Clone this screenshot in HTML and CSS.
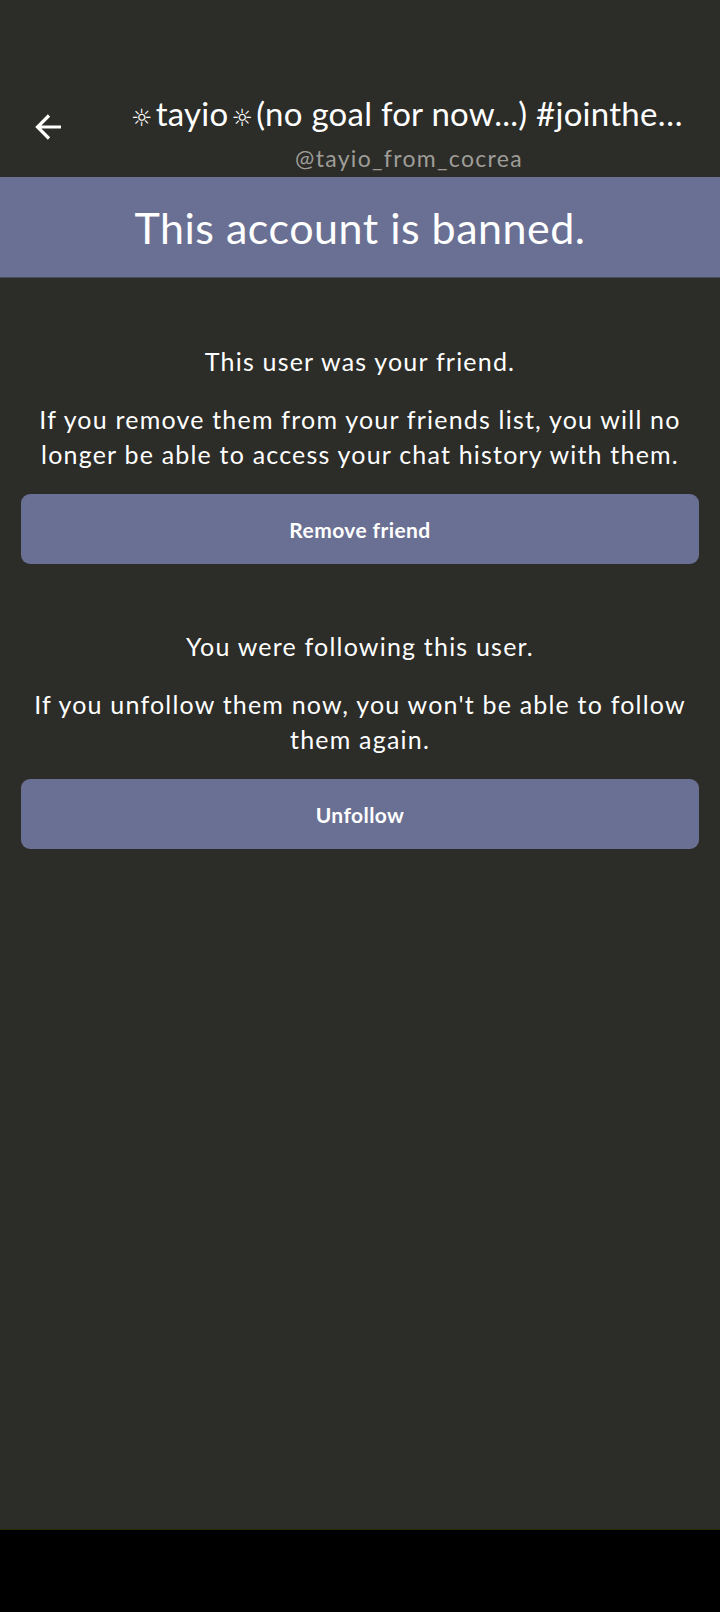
FILE: index.html
```html
<!DOCTYPE html>
<html lang="en">
<head>
    <meta charset="UTF-8">
    <meta name="viewport" content="width=device-width, initial-scale=1.0">
    <title>Banned account</title>
    <link rel="stylesheet" href="styles.css">
</head>
<body>
    <div class="app">
        <header class="header">
            <button class="back" aria-label="Back">
                <svg width="30" height="30" viewBox="0 0 30 30">
                    <path d="M27 15H4M15 3.5L3.5 15L15 26.5" fill="none" stroke="#fff" stroke-width="3.2"/>
                </svg>
            </button>
            <div class="names">
                <div class="title"><span class="sun">☼</span>tayio<span class="sun">☼</span>(no goal for now...) #jointhecocreaparty</div>
                <div class="handle">@tayio_from_cocrea</div>
            </div>
        </header>

        <div class="banner">This account is banned.</div>

        <main class="content">
            <section class="block">
                <p class="lead">This user was your friend.</p>
                <p class="note">If you remove them from your friends list, you will no longer be able to access your chat history with them.</p>
                <button class="action">Remove friend</button>
            </section>

            <section class="block">
                <p class="lead">You were following this user.</p>
                <p class="note">If you unfollow them now, you won't be able to follow them again.</p>
                <button class="action">Unfollow</button>
            </section>
        </main>

        <div class="navbar"></div>
    </div>
</body>
</html>
```

FILE: styles.css
```css
* {
    margin: 0;
    padding: 0;
    box-sizing: border-box;
}

body {
    font-family: "Lato", "Noto Sans", sans-serif;
    background-color: #2c2c28;
    color: #fff;
}

.app {
    display: flex;
    flex-direction: column;
    height: 1612px;
}

.header {
    display: flex;
    align-items: flex-start;
    padding-top: 93px;
    height: 177px;
}

.back {
    width: 98px;
    height: 68px;
    display: flex;
    align-items: center;
    justify-content: center;
    background: none;
    border: none;
}

.names {
    flex: 1;
    min-width: 0;
    padding: 0 30px;
    text-align: center;
}

.title {
    font-size: 33px;
    line-height: 40px;
    letter-spacing: 0.25px;
    white-space: nowrap;
    overflow: hidden;
    text-overflow: ellipsis;
}

.sun {
    font-family: "DejaVu Sans", sans-serif;
    font-size: 24px;
    margin: 0 3px;
}

.handle {
    margin-top: 7px;
    font-size: 23px;
    line-height: 26px;
    color: #9e9d98;
    letter-spacing: 1.3px;
}

.banner {
    background-color: #6a7093;
    height: 101px;
    border-bottom: 1px solid #4a4c5a;
    display: flex;
    align-items: center;
    justify-content: center;
    font-size: 43px;
    letter-spacing: 0.5px;
}

.content {
    flex: 1;
    padding: 44px 21px 0;
}

.block {
    margin-top: 22px;
    text-align: center;
}

.block + .block {
    margin-top: 65px;
}

.lead,
.note {
    font-size: 25px;
    line-height: 35px;
    letter-spacing: 1.2px;
}

.note {
    margin-top: 23px;
    padding: 0 4px;
}

.action {
    display: block;
    width: 100%;
    height: 70px;
    margin-top: 22px;
    background-color: #6a7093;
    color: #fff;
    border: none;
    border-radius: 9px;
    font-family: "Lato", "Noto Sans", sans-serif;
    font-weight: bold;
    font-size: 21px;
    letter-spacing: 0.4px;
}

.navbar {
    height: 83px;
    background-color: #000;
    border-top: 1px solid #2a2a06;
}
```
